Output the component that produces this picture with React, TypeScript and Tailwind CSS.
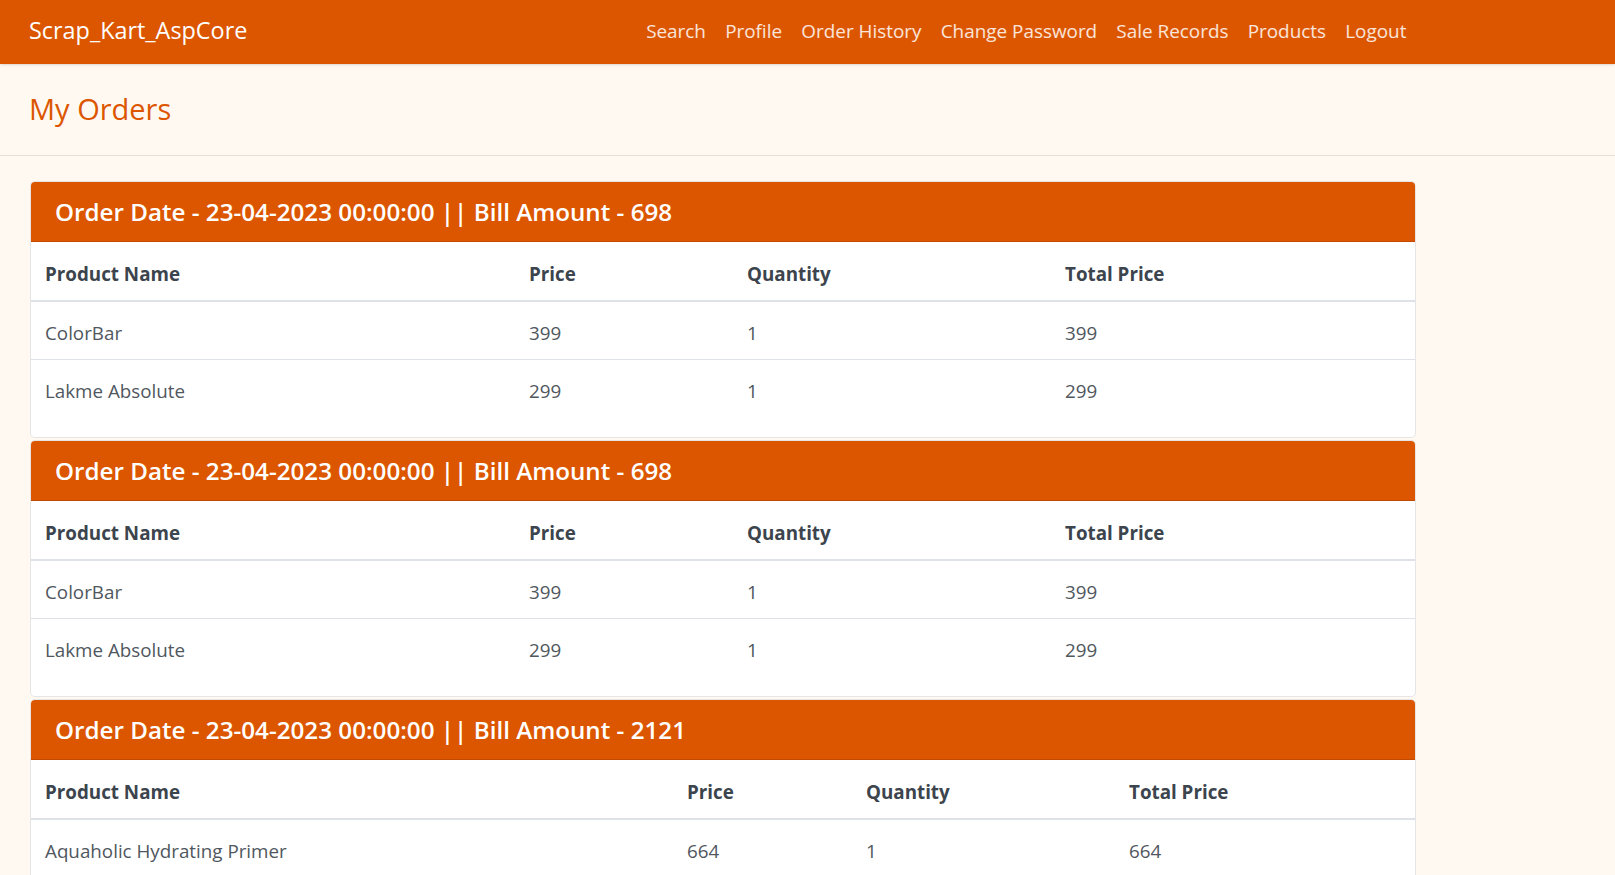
import React from 'react';

interface OrderItem {
  name: string;
  price: number;
  qty: number;
}

interface Order {
  date: string;
  bill: number;
  items: OrderItem[];
  cols: string[];
}

const orders: Order[] = [
  {
    date: '23-04-2023 00:00:00',
    bill: 698,
    items: [
      { name: 'ColorBar', price: 399, qty: 1 },
      { name: 'Lakme Absolute', price: 299, qty: 1 },
    ],
    cols: ['w-[484px]', 'w-[218px]', 'w-[318px]', ''],
  },
  {
    date: '23-04-2023 00:00:00',
    bill: 698,
    items: [
      { name: 'ColorBar', price: 399, qty: 1 },
      { name: 'Lakme Absolute', price: 299, qty: 1 },
    ],
    cols: ['w-[484px]', 'w-[218px]', 'w-[318px]', ''],
  },
  {
    date: '23-04-2023 00:00:00',
    bill: 2121,
    items: [
      { name: 'Aquaholic Hydrating Primer', price: 664, qty: 1 },
      { name: 'Maybelline Fit Me', price: 1457, qty: 1 },
    ],
    cols: ['w-[642px]', 'w-[179px]', 'w-[263px]', ''],
  },
];

const links = ['Search', 'Profile', 'Order History', 'Change Password', 'Sale Records', 'Products', 'Logout'];

const OrderCard: React.FC<{ order: Order }> = ({ order }) => (
  <div className="mb-[2px] rounded-[5px] border border-black/10 bg-white pb-[20px]">
    <div className="flex h-[60px] items-center rounded-t-[4px] border-b border-[#c24b00] bg-[#dc5600] pl-[24px]">
      <h4 className="pt-[2px] text-[24.2px] font-semibold text-white">
        Order Date - {order.date} || Bill Amount - {order.bill}
      </h4>
    </div>
    <table className="w-full table-fixed border-collapse text-left text-[18.8px]">
      <colgroup>
        {order.cols.map((c, i) => (
          <col key={i} className={c} />
        ))}
      </colgroup>
      <thead>
        <tr className="h-[59px] border-b-2 border-[#dee2e6] text-[#3c444d]">
          <th className="pl-[14px] pt-[6px] font-bold">Product Name</th>
          <th className="pl-[14px] pt-[6px] font-bold">Price</th>
          <th className="pl-[14px] pt-[6px] font-bold">Quantity</th>
          <th className="pl-[14px] pt-[6px] font-bold">Total Price</th>
        </tr>
      </thead>
      <tbody className="text-[#50575e]">
        {order.items.map((it, i) => (
          <tr key={i} className="h-[58px] border-t border-[#dee2e6] first:border-t-0">
            <td className="pl-[14px] pt-[6px]">{it.name}</td>
            <td className="pl-[14px] pt-[6px]">{it.price}</td>
            <td className="pl-[14px] pt-[6px]">{it.qty}</td>
            <td className="pl-[14px] pt-[6px]">{it.price * it.qty}</td>
          </tr>
        ))}
      </tbody>
    </table>
  </div>
);

export default function App() {
  return (
    <div className="min-h-screen bg-[#fff9f2]" style={{ fontFamily: '"Open Sans", "Noto Sans", sans-serif' }}>
      <nav className="h-[64px] bg-[#dc5600] shadow-sm">
        <div className="flex h-full w-[1416px] items-center pl-[29px]">
          <span className="pb-[2px] text-[23.4px] text-white">Scrap_Kart_AspCore</span>
          <ul className="ml-auto flex items-center">
            {links.map((l) => (
              <li key={l} className="px-[9.6px] pb-[2px] text-[18.9px] text-white/85">
                {l}
              </li>
            ))}
          </ul>
        </div>
      </nav>
      <div className="flex h-[92px] items-center border-b border-[#e8e1da] pl-[29px]">
        <h3 className="pb-[2px] text-[29px] font-medium text-[#dc5600]">My Orders</h3>
      </div>
      <div className="w-[1416px] pl-[30px] pt-[25px]">
        {orders.map((o, i) => (
          <OrderCard key={i} order={o} />
        ))}
      </div>
    </div>
  );
}
